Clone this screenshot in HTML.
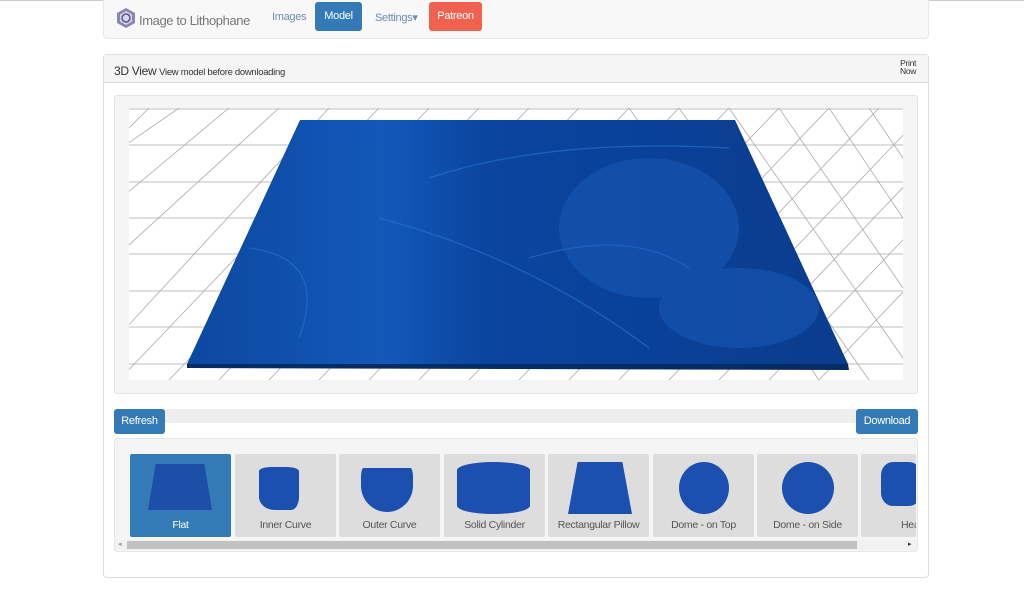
<!DOCTYPE html>
<html><head><meta charset="utf-8"><style>
*{box-sizing:border-box;margin:0;padding:0}
body{width:1024px;height:591px;background:#fff;font-family:"Liberation Sans",sans-serif;position:relative;overflow:hidden;font-size:11px;color:#333;letter-spacing:-0.3px}
.abs{position:absolute}
.nav{left:103px;top:-1px;width:826px;height:40px;background:#f8f8f8;border:1px solid #e7e7e7;border-radius:0 0 4px 4px}
.btn{position:absolute;color:#fff;border-radius:3px;text-align:center}
.thumb{position:absolute;top:454px;width:101px;height:83px;background:#ddd;border-radius:2px;overflow:hidden}
.thumb span{position:absolute;left:0;right:0;top:65px;text-align:center;color:#555;font-size:10.5px}
</style></head><body>
<div class="abs" style="left:0;top:0;width:1024px;height:1px;background:#ccc"></div>
<div class="abs nav"></div>
<svg class="abs" style="left:115px;top:7px" width="22" height="22" viewBox="0 0 22 22"><polygon points="11,1 20,6 20,16 11,21 2,16 2,6" fill="#8a86b3"/><polygon points="11,4 17,7.5 17,14.5 11,18 5,14.5 5,7.5" fill="#d8d6ea"/><circle cx="11" cy="11" r="4" fill="none" stroke="#5d5890" stroke-width="1.6"/></svg>
<div class="abs" style="left:139px;top:13px;font-size:13px;color:#777;letter-spacing:-0.4px">Image to Lithophane</div>
<div class="abs" style="left:272px;top:11px;color:#6b8cb3">Images</div>
<div class="btn" style="left:315px;top:2px;width:47px;height:29px;background:#337ab7;line-height:29px">Model</div>
<div class="abs" style="left:375px;top:11px;color:#6b8cb3">Settings▾</div>
<div class="btn" style="left:429px;top:2px;width:53px;height:29px;background:#f0624f;line-height:29px">Patreon</div>

<div class="abs" style="left:103px;top:54px;width:826px;height:524px;border:1px solid #ddd;border-radius:4px"></div>
<div class="abs" style="left:104px;top:55px;width:824px;height:28px;background:#f5f5f5;border-bottom:1px solid #ddd"></div>
<div class="abs" style="left:114px;top:64px;font-size:11px"><span style="font-size:12px">3D View</span> <span style="font-size:9.5px">View model before downloading</span></div>
<div class="abs" style="left:900px;top:59px;font-size:8.5px;line-height:8px;text-align:right">Print<br>Now</div>

<div class="abs" style="left:114px;top:95px;width:804px;height:299px;background:#f5f5f5;border:1px solid #e3e3e3;border-radius:3px"></div>
<svg class="abs" style="left:129px;top:108px" width="774" height="272" viewBox="0 0 774 272">
<rect width="774" height="272" fill="#fff"/>
<g stroke="#aaa" stroke-width="0.8" fill="none">
<line x1="0" y1="1" x2="774" y2="1"/><line x1="0" y1="37" x2="774" y2="37"/><line x1="0" y1="74" x2="774" y2="74"/><line x1="0" y1="110" x2="774" y2="110"/><line x1="0" y1="146" x2="774" y2="146"/><line x1="0" y1="183" x2="774" y2="183"/><line x1="0" y1="219" x2="774" y2="219"/><line x1="0" y1="256" x2="774" y2="256"/>
<path d="M-40 260 L200 0 M-10 272 L250 0 M40 272 L300 0 M90 272 L350 0 M140 272 L400 0 M190 272 L450 0 M240 272 L500 0 M290 272 L550 0 M340 272 L600 0 M390 272 L650 0 M440 272 L700 0 M490 272 L750 0 M540 272 L800 0 M590 272 L850 0 M640 272 L900 0 M690 272 L950 0 M-80 210 L150 0 M-80 150 L100 0 M-80 90 L50 0 M0 20 L20 0"/>
<path d="M600 0 L774 250 M650 0 L774 180 M700 0 L774 110 M550 0 L740 272 M500 0 L690 272 M740 0 L774 50"/>
</g>
<defs><linearGradient id="g" x1="0" x2="1"><stop offset="0" stop-color="#0c48a0"/><stop offset="0.3" stop-color="#1358b8"/><stop offset="0.45" stop-color="#0a45a0"/><stop offset="1" stop-color="#0a3c8e"/></linearGradient></defs>
<polygon points="171,12 606,12 719,256 58,256" fill="url(#g)"/>
<polygon points="58,256 719,256 720,262 58,260" fill="#062c66"/>
<g fill="none" stroke="#2a78d8" stroke-width="1.2" opacity="0.6">
<path d="M120 140 Q200 150 170 230"/><path d="M300 70 Q420 30 600 40"/><path d="M250 110 Q400 150 520 240"/><path d="M400 150 Q500 120 560 160"/>
</g>
<g fill="#1d5fbe" opacity="0.45"><ellipse cx="520" cy="120" rx="90" ry="70"/><ellipse cx="610" cy="200" rx="80" ry="40"/></g>
</svg>

<div class="abs" style="left:114px;top:409px;width:804px;height:14px;background:#eee;border-radius:3px"></div>
<div class="btn" style="left:114px;top:409px;width:51px;height:25px;background:#337ab7;line-height:25px">Refresh</div>
<div class="btn" style="left:856px;top:409px;width:62px;height:25px;background:#337ab7;line-height:25px">Download</div>

<div class="abs" style="left:114px;top:438px;width:804px;height:114px;background:#f5f5f5;border:1px solid #e6e6e6;border-radius:3px"></div>
<div class="thumb" style="left:130px;background:#337ab7"><div class="abs" style="left:18px;top:10px;width:64px;height:46px;background:#1b4fa8;clip-path:polygon(12% 0,88% 0,100% 100%,0 100%)"></div><span style="color:#fff">Flat</span></div>
<div class="thumb" style="left:235px"><div class="abs" style="left:24px;top:13px;width:40px;height:43px;background:#1b50b0;border-radius:30% 30% 20% 40%/10% 10% 30% 30%"></div><span>Inner Curve</span></div>
<div class="thumb" style="left:339px"><div class="abs" style="left:22px;top:14px;width:52px;height:44px;background:#1b50b0;border-radius:5% 5% 50% 50%/20% 20% 60% 60%"></div><span>Outer Curve</span></div>
<div class="thumb" style="left:444px"><div class="abs" style="left:13px;top:8px;width:73px;height:52px;background:#1b50b0;border-radius:50%/16%"></div><span>Solid Cylinder</span></div>
<div class="thumb" style="left:548px"><div class="abs" style="left:20px;top:8px;width:64px;height:52px;background:#1b50b0;clip-path:polygon(15% 0,85% 0,100% 100%,0 100%)"></div><span>Rectangular Pillow</span></div>
<div class="thumb" style="left:653px"><div class="abs" style="left:26px;top:8px;width:50px;height:52px;background:#1b50b0;border-radius:50%"></div><span>Dome - on Top</span></div>
<div class="thumb" style="left:757px"><div class="abs" style="left:25px;top:8px;width:52px;height:52px;background:#1b50b0;border-radius:50%"></div><span>Dome - on Side</span></div>
<div class="thumb" style="left:861px;width:55px"><div class="abs" style="left:20px;top:8px;width:40px;height:44px;background:#1b50b0;border-radius:30%"></div><span style="text-align:left;left:40px">Hea</span></div>
<div class="abs" style="left:115px;top:540px;width:802px;height:10px;background:#f1f1f1"></div>
<div class="abs" style="left:127px;top:541px;width:730px;height:8px;background:#c1c1c1"></div>
<div class="abs" style="left:118px;top:540px;font-size:7px;color:#999">◂</div>
<div class="abs" style="left:908px;top:540px;font-size:7px;color:#333">▸</div>
</body></html>
